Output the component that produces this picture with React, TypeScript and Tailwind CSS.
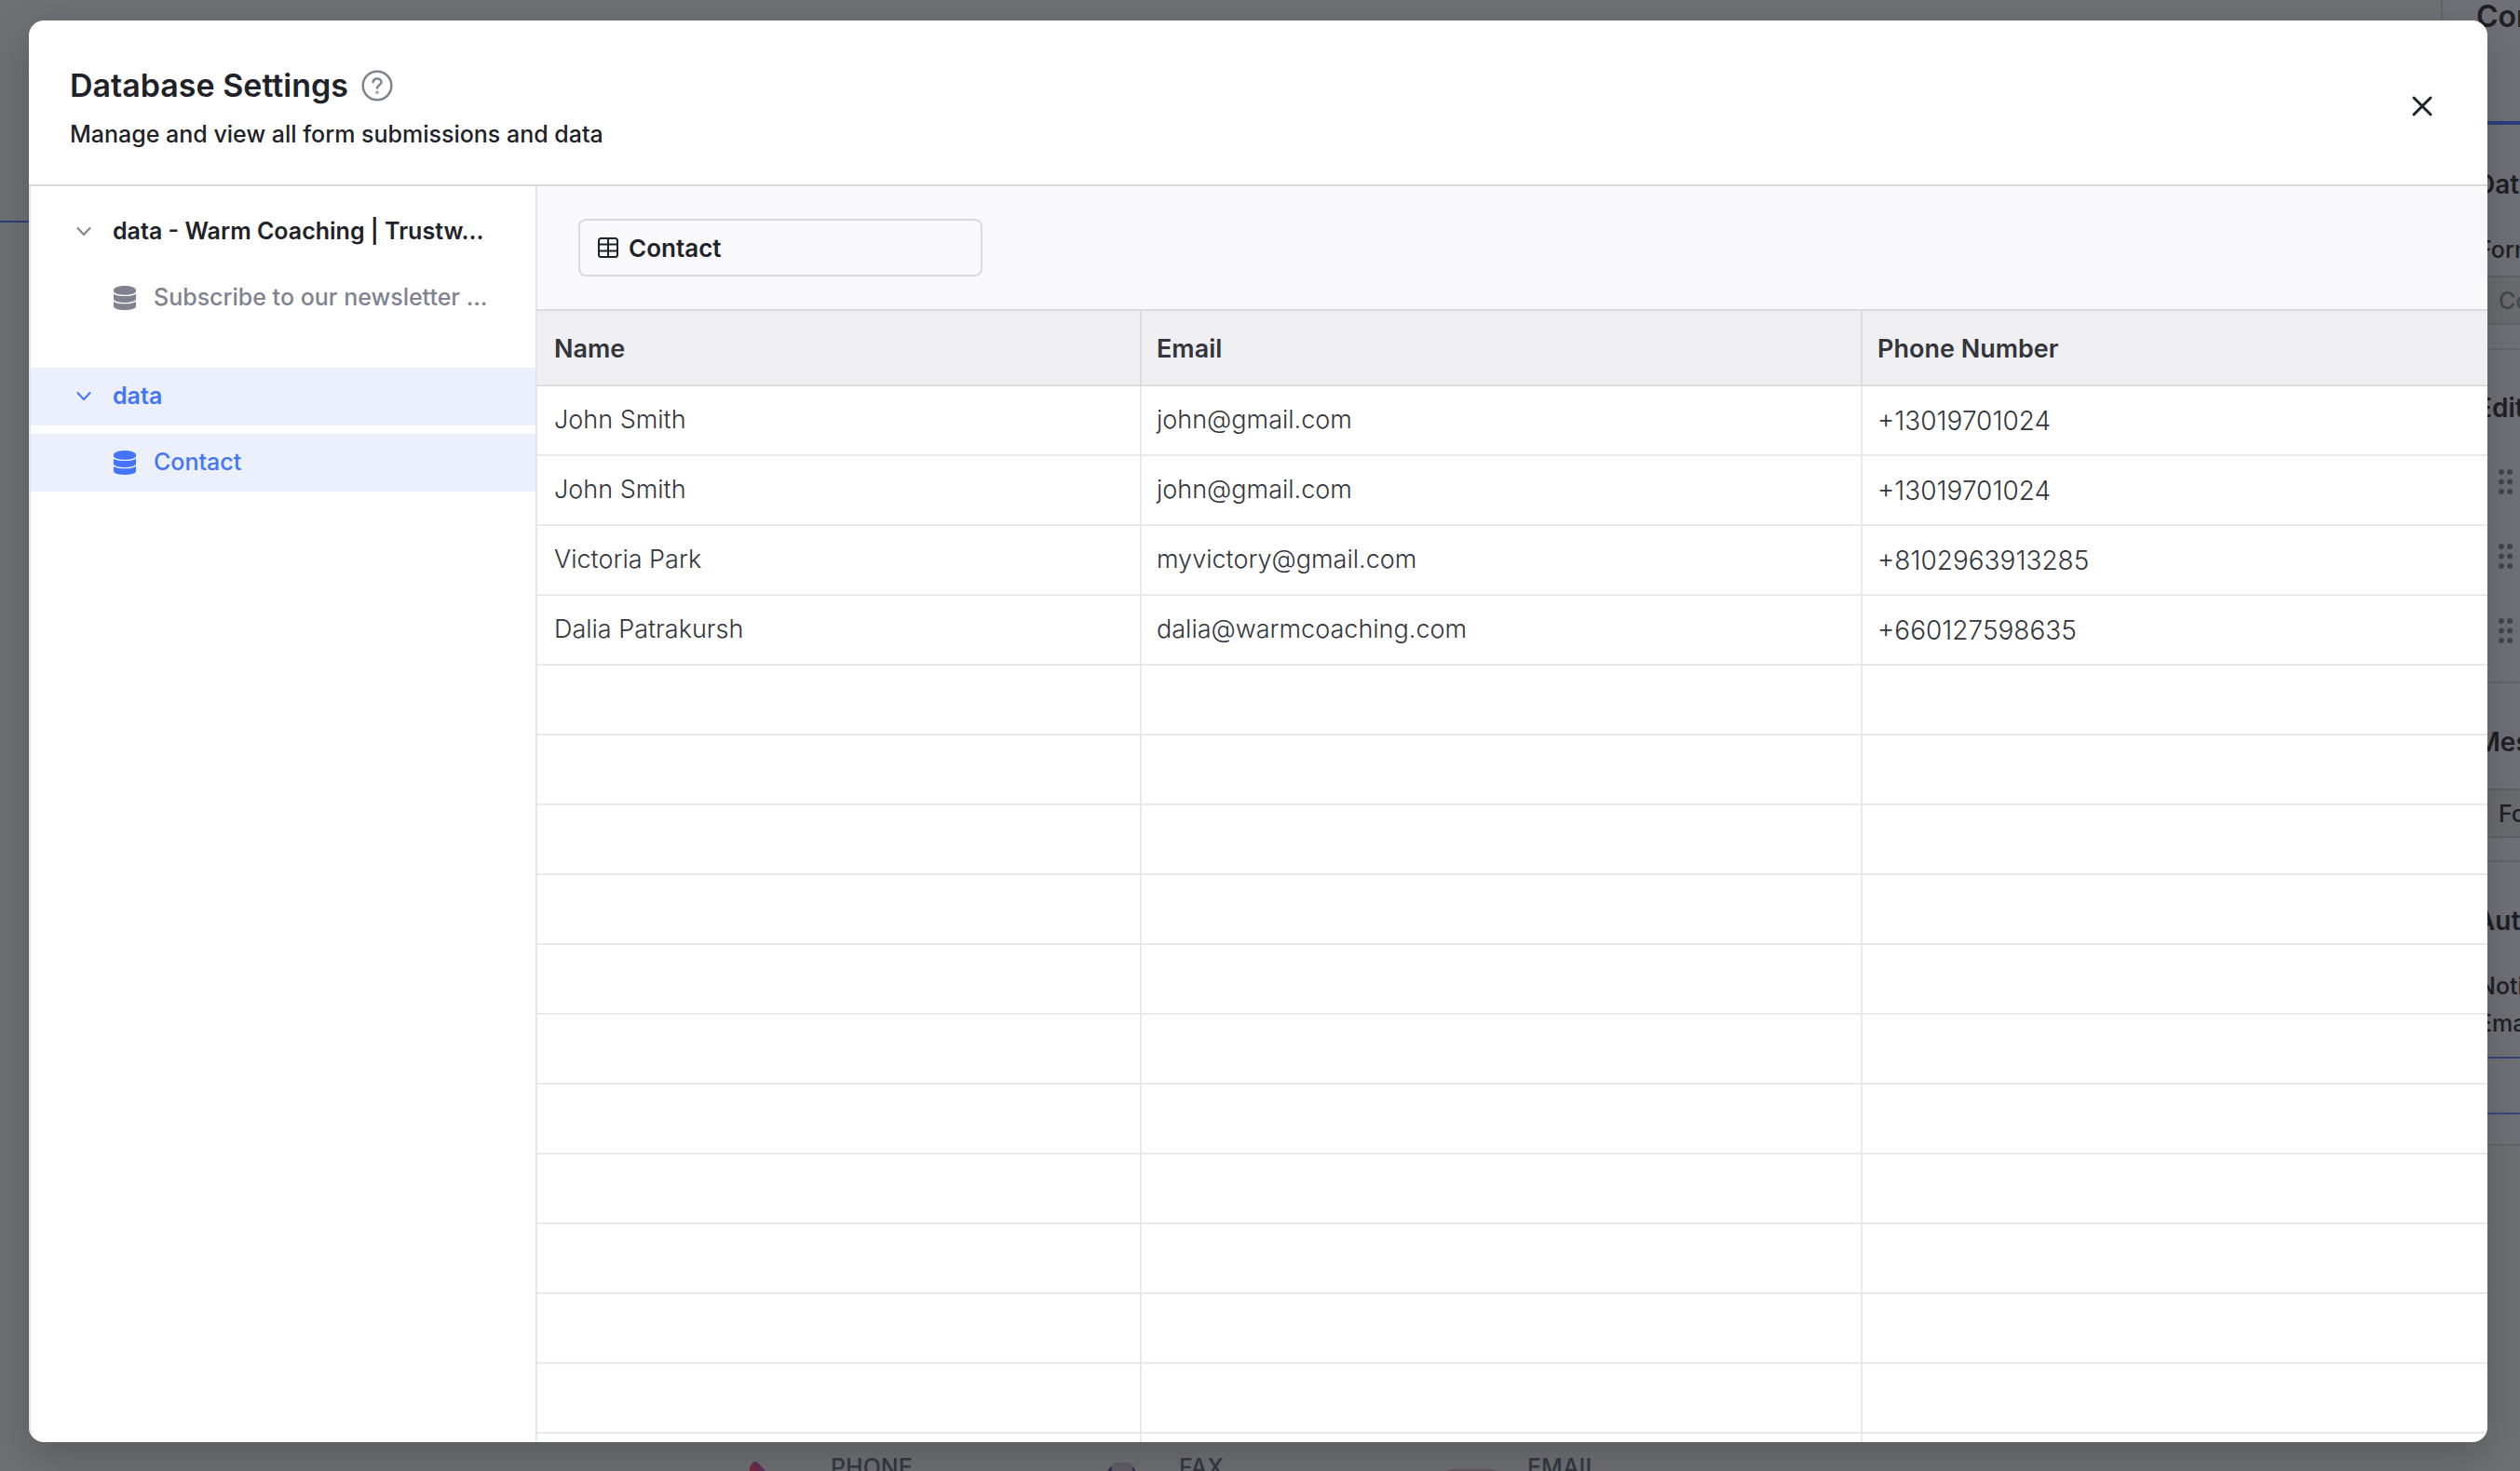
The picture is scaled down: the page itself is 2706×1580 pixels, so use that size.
import React, { useState } from 'react';
import { X } from 'lucide-react';

interface Submission {
  name: string;
  email: string;
  phone: string;
}

const submissions: Submission[] = [
  { name: 'John Smith', email: 'john@gmail.com', phone: '+13019701024' },
  { name: 'John Smith', email: 'john@gmail.com', phone: '+13019701024' },
  { name: 'Victoria Park', email: 'myvictory@gmail.com', phone: '+8102963913285' },
  { name: 'Dalia Patrakursh', email: 'dalia@warmcoaching.com', phone: '+660127598635' },
];

const TOTAL_ROWS = 16;

const groups = [
  { id: 'warm', title: 'data - Warm Coaching | Trustw...', tables: ['Subscribe to our newsletter ...'] },
  { id: 'data', title: 'data', tables: ['Contact'] },
];

function DatabaseIcon() {
  return (
    <svg className="w-6 h-[26px] shrink-0" viewBox="0 0 24 26" fill="currentColor" aria-hidden="true">
      <path d="M12 0C18.600 0 24 2 24 4.400v1.400c0 2.400-5.400 4-12 4S0 8.200 0 5.800V4.400C0 2 5.400 0 12 0Z" />
      <path d="M0 8.700c2.200 1.500 6.700 2.300 12 2.300s9.800-.8 12-2.300v5.300c0 2.400-5.400 4-12 4S0 16.400 0 14Z" />
      <path d="M0 16.900c2.200 1.500 6.700 2.300 12 2.300s9.800-.8 12-2.300v5c0 2.400-5.400 4.100-12 4.100S0 24.300 0 21.900Z" />
    </svg>
  );
}

function ChevronIcon() {
  return (
    <svg className="w-4 h-4 shrink-0" viewBox="0 0 16 16" fill="none" stroke="currentColor" strokeWidth="2" strokeLinecap="round" strokeLinejoin="round" aria-hidden="true">
      <path d="M1.500 4L8 11l6.500-7" />
    </svg>
  );
}

function TableIcon() {
  return (
    <svg className="w-[22px] h-[22px] shrink-0" viewBox="0 0 22 22" fill="none" stroke="currentColor" strokeWidth="2" aria-hidden="true">
      <rect x="1" y="1" width="20" height="20" rx="2.500" />
      <path d="M1 7.500h20M1 14.500h20M11 1v20" />
    </svg>
  );
}

function HelpIcon() {
  return (
    <svg className="w-[34px] h-[34px]" viewBox="0 0 34 34" fill="none" stroke="currentColor" strokeWidth="2.500" strokeLinecap="round" strokeLinejoin="round" aria-hidden="true">
      <circle cx="17" cy="17" r="15.300" />
      <path d="M12.600 13.200c.2-2.300 2-3.800 4.400-3.800s4.500 1.600 4.500 3.900c0 3.200-4.500 3.300-4.500 6.200" />
      <circle cx="17" cy="24.200" r="0.500" />
    </svg>
  );
}

function DragHandle() {
  return (
    <svg className="w-[15px] h-[27px]" viewBox="0 0 15 27" fill="#43464d" aria-hidden="true">
      <circle cx="3" cy="3" r="3" />
      <circle cx="12" cy="3" r="3" />
      <circle cx="3" cy="13.500" r="3" />
      <circle cx="12" cy="13.500" r="3" />
      <circle cx="3" cy="24" r="3" />
      <circle cx="12" cy="24" r="3" />
    </svg>
  );
}

// Form settings drawer, dimmed behind the dialog
function SettingsPanel() {
  return (
    <aside className="absolute top-0 right-0 w-[85px] h-[1231px] overflow-hidden whitespace-nowrap bg-[#707176] border-l-2 border-b-2 border-[#65666a] text-[#1d2024]">
      <div className="h-[134px] pl-9 border-b-4 border-[#2a407f] text-[32px] leading-9 font-semibold">Content</div>
      <section className="h-[242px] pt-[46px] pl-9 border-b-2 border-[#66666f]">
        <h2 className="text-[28px] leading-9 font-semibold">Database</h2>
        <p className="mt-9 pl-0.5 text-[25px] leading-8 font-medium">Form name</p>
        <div className="mt-3 h-[53px] pl-6 border-y-2 border-[#626368] bg-[#6b6c70] text-[#45474b] text-[25px] leading-[50px] font-medium">Contact</div>
      </section>
      <section className="h-[358px] pt-[44px] pl-9 border-b-2 border-[#66666f]">
        <h2 className="text-[28px] leading-9 font-semibold">Edit fields</h2>
        <div className="mt-12 pl-6 flex flex-col gap-[53px]">
          <DragHandle />
          <DragHandle />
          <DragHandle />
        </div>
      </section>
      <section className="h-[192px] pt-[45px] pl-9 border-b-2 border-[#66666f]">
        <h2 className="text-[28px] leading-9 font-semibold">Message</h2>
        <div className="mt-8 h-[53px] pl-6 border-y-2 border-[#626368] bg-[#6b6c70] text-[25px] leading-[50px] font-medium">Form</div>
      </section>
      <section className="pt-[45px] pl-9">
        <h2 className="text-[28px] leading-9 font-semibold">Automation</h2>
        <p className="mt-8 pl-0.5 text-[25px] leading-10 font-medium">Notification</p>
        <p className="pl-0.5 text-[25px] leading-10 font-medium">Email</p>
        <div className="mt-4 h-[62px] border-y-2 border-[#37487c]" />
      </section>
    </aside>
  );
}

function PageFooter() {
  return (
    <footer className="absolute bottom-0 left-[804px] flex h-[18px] w-[1200px] overflow-hidden text-[25px] leading-7 font-medium text-[#343a42]">
      <div className="w-[375px] flex shrink-0">
        <svg className="w-[88px] h-[18px]" viewBox="0 0 88 18" aria-hidden="true">
          <path d="M1 18c0-4 2-9 5.500-10 2-.5 3 .8 4.500 2.500l7 7.500Z" fill="#5f3058" />
          <path d="M1 18c0-4 2-8 4-9l4 9Z" fill="#7a2b3c" />
        </svg>
        <span>PHONE</span>
      </div>
      <div className="w-[375px] flex shrink-0">
        <svg className="w-[87px] h-[18px]" viewBox="0 0 87 18" aria-hidden="true">
          <path d="M11 18c0-2 1-4 4-5h22c2 1 3 3 3 5Z" fill="#332f52" />
          <path d="M15 18v-5c1-2 2-4 4-4h14c2 0 3 2 4 4v5Z" fill="#605d66" />
        </svg>
        <span>FAX</span>
      </div>
      <div className="flex shrink-0">
        <svg className="w-[86px] h-[18px]" viewBox="0 0 86 18" aria-hidden="true">
          <path d="M0 18l3-2h46l3 2Z" fill="#5f5b5e" />
        </svg>
        <span>EMAIL</span>
      </div>
    </footer>
  );
}

export default function App() {
  const [selected, setSelected] = useState('data');

  const rows: (Submission | null)[] = Array.from({ length: TOTAL_ROWS }, (_, i) => submissions[i] ?? null);

  return (
    <div className="relative h-screen overflow-hidden bg-[#6f7074] font-['Inter',sans-serif] text-[#1f2228] pr-[35px] pl-[31px] pt-[22px] pb-[31px]">
      <div className="absolute left-0 top-[237px] w-[31px] h-[2px] bg-[#2a407f]" />
      <SettingsPanel />
      <PageFooter />

      <div role="dialog" aria-labelledby="dialog-title" className="relative h-full flex flex-col overflow-hidden rounded-2xl bg-white shadow-[0_16px_48px_rgba(0,0,0,0.2)]">
        <header className="shrink-0 h-[178px] flex items-center justify-between pl-11 pr-[52px] border-b-2 border-[#d9dae0]">
          <div className="pt-3">
            <div className="flex items-center gap-3.5">
              <h1 id="dialog-title" className="text-[34px] leading-[48px] font-semibold">Database Settings</h1>
              <button type="button" aria-label="Help" className="text-[#80828f]">
                <HelpIcon />
              </button>
            </div>
            <p className="mt-2 text-[25px] leading-10 font-medium">Manage and view all form submissions and data</p>
          </div>
          <button type="button" aria-label="Close" className="mt-2">
            <X className="w-9 h-9" strokeWidth={2} />
          </button>
        </header>

        <div className="flex-1 min-h-0 flex">
          <nav className="w-[546px] shrink-0 pt-[18px] border-x-2 border-[#e1e5ee] text-[25px] flex flex-col gap-[44px]">
            {groups.map((group) => {
              const active = group.id === selected;
              return (
                <div key={group.id} className="flex flex-col gap-[9px]">
                  <button
                    type="button"
                    onClick={() => setSelected(group.id)}
                    className={`h-[62px] pl-[49px] flex items-center gap-[23px] text-left font-semibold ${active ? 'bg-[#ebeffe] text-[#4275fb]' : ''}`}
                  >
                    <span className={active ? '' : 'text-[#80828f]'}>
                      <ChevronIcon />
                    </span>
                    {group.title}
                  </button>
                  {group.tables.map((table) => (
                    <button
                      key={table}
                      type="button"
                      onClick={() => setSelected(group.id)}
                      className={`h-[62px] pl-[89px] flex items-center gap-[19px] text-left font-medium ${active ? 'bg-[#ebeffe] text-[#4275fb]' : 'text-[#80828f]'}`}
                    >
                      <DatabaseIcon />
                      {table}
                    </button>
                  ))}
                </div>
              );
            })}
          </nav>

          <main className="flex-1 min-w-0 flex flex-col overflow-hidden">
            <div className="shrink-0 h-[132px] pl-11 flex items-center bg-[#f9f9fb]">
              <button type="button" className="w-[434px] h-[62px] pl-[19px] flex items-center gap-[11px] rounded-lg border-2 border-[#d9dae0] text-[26px] font-semibold">
                <TableIcon />
                Contact
              </button>
            </div>
            <div className="flex-1 min-h-0 overflow-hidden">
              <table className="w-full table-fixed border-separate border-spacing-0 text-left text-[27px] text-[#33353c]">
                <thead>
                  <tr className="h-[83px] bg-[#efeff1]">
                    <th className="w-[649px] pl-[18px] pt-1 border-t-2 border-b-2 border-r-2 border-[#dcdde0] font-semibold">Name</th>
                    <th className="w-[774px] pl-4 pt-1 border-t-2 border-b-2 border-r-2 border-[#dcdde0] font-semibold">Email</th>
                    <th className="pl-4 pt-1 border-t-2 border-b-2 border-[#dcdde0] font-semibold">Phone Number</th>
                  </tr>
                </thead>
                <tbody>
                  {rows.map((row, i) => (
                    <tr key={i} className="h-[75px] font-light">
                      <td className="pl-[18px] border-b-2 border-r-2 border-[#e8e9eb]">{row?.name}</td>
                      <td className="pl-4 border-b-2 border-r-2 border-[#e8e9eb]">{row?.email}</td>
                      <td className="pl-4 border-b-2 border-[#e8e9eb] text-[28px]">{row?.phone}</td>
                    </tr>
                  ))}
                </tbody>
              </table>
            </div>
          </main>
        </div>
      </div>
    </div>
  );
}
